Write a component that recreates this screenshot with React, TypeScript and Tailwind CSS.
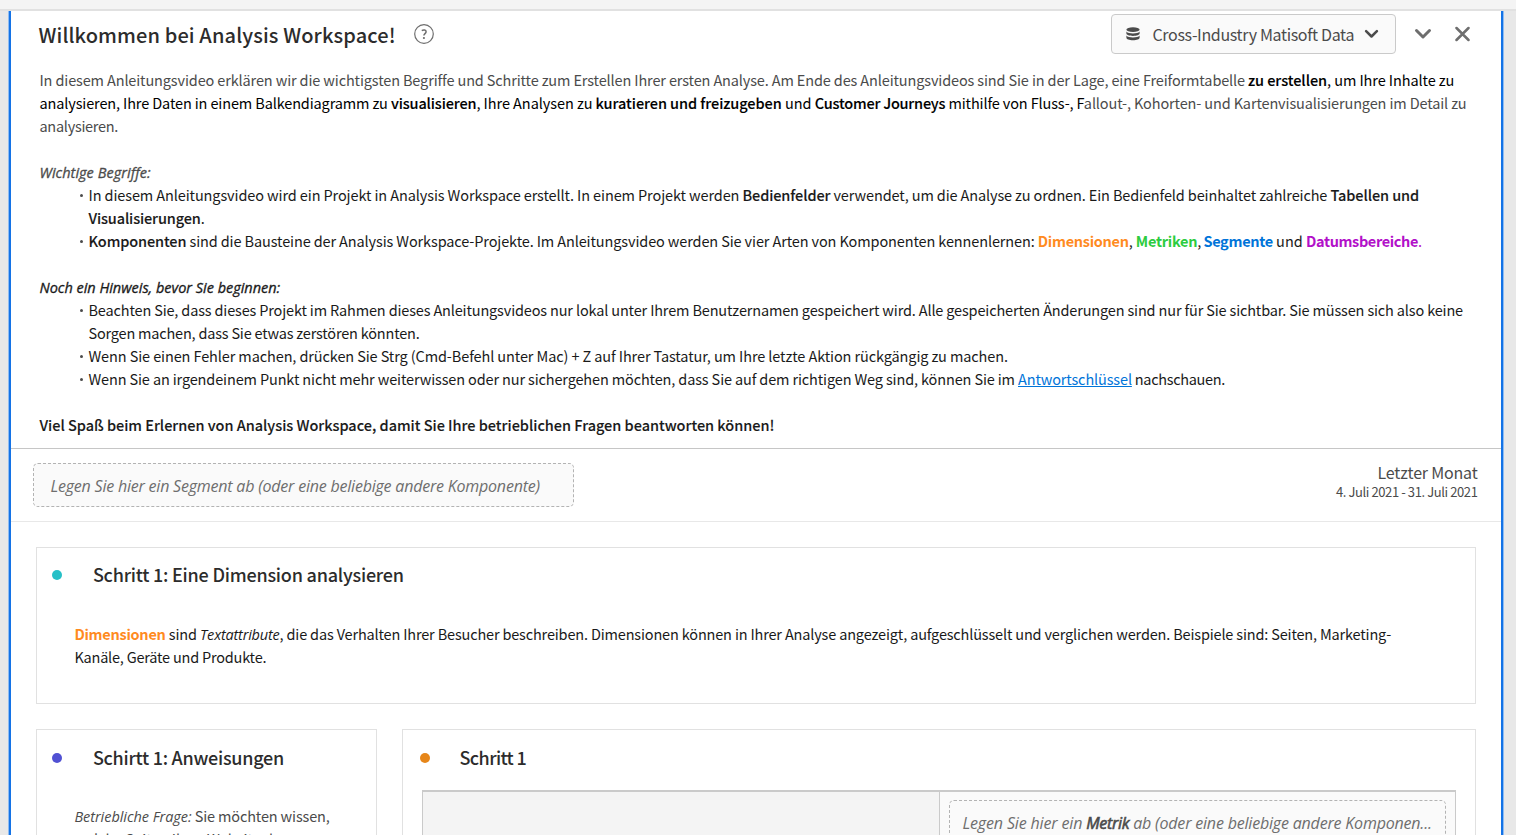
import type { ReactNode } from "react";

const Chevron = ({ className }: { className: string }) => (
  <svg className={className} viewBox="0 0 18 12" fill="none" stroke="currentColor" strokeWidth="3" strokeLinecap="round" strokeLinejoin="round">
    <path d="M2.500 2.500 9 9l6.500-6.500" />
  </svg>
);

const DatabaseIcon = () => (
  <svg className="h-[14px] w-[14px] text-[#4b4b4b]" viewBox="0 0 14 14" fill="currentColor">
    <ellipse cx="7" cy="2.6" rx="6.6" ry="2.3" />
    <path d="M.4 4.500C1.400 6 4 6.400 7 6.400S12.600 6 13.600 4.500V6.600C13.600 8 10.800 8.900 7 8.900S.4 8 .4 6.600Z" />
    <path d="M.4 8.500C1.400 10 4 10.400 7 10.400S12.600 10 13.600 8.500V10.800C13.600 12.300 10.800 13.300 7 13.300S.4 12.300 .4 10.800Z" />
  </svg>
);

const HelpIcon = () => (
  <svg className="h-5 w-5" viewBox="0 0 20 20" fill="none">
    <circle cx="10" cy="10" r="9.3" stroke="#6e6e6e" strokeWidth="1.2" />
    <path d="M7.800 6.700C9.300 5.500 12.100 5.700 12.100 7.800C12.100 9.500 9.900 9.700 9.900 11.500" stroke="#6e6e6e" strokeWidth="1.5" />
    <circle cx="9.9" cy="14" r="1.1" fill="#6e6e6e" />
  </svg>
);

const CloseIcon = () => (
  <svg className="h-4 w-4 text-[#6e6e6e]" viewBox="0 0 16 16" fill="none" stroke="currentColor" strokeWidth="2.5" strokeLinecap="round">
    <path d="M2.500 2l12 12M14.500 2l-12 12" />
  </svg>
);

const Line = ({ children, className = "" }: { children?: ReactNode; className?: string }) => (
  <p className={`h-[23px] whitespace-pre ${className}`}>{children}</p>
);

const Strong = ({ children, className = "" }: { children: ReactNode; className?: string }) => (
  <b className={`font-medium [-webkit-text-stroke:0.1px_currentColor] ${className}`}>{children}</b>
);

const Em = ({ children, className = "" }: { children: ReactNode; className?: string }) => (
  <em className={`font-['Open_Sans','Noto_Sans',sans-serif] italic ${className}`}>{children}</em>
);

const Item = ({ children }: { children: ReactNode }) => (
  <li className="flex gap-[6px] pl-[40px]">
    <span className="mt-[11px] h-[3px] w-[3px] shrink-0 rounded-full bg-[#4b4b4b]" />
    <div>{children}</div>
  </li>
);

const CardTitle = ({ dot, className, children }: { dot: string; className: string; children: ReactNode }) => (
  <div className="flex h-6 items-center">
    <span className={`h-[10px] w-[10px] rounded-full ${dot}`} />
    <h2 className={`mb-[2px] whitespace-nowrap text-[18px] leading-6 font-medium text-[#2c2c2c] ${className}`}>{children}</h2>
  </div>
);

export default function App() {
  return (
    <div className="flex h-[835px] w-full flex-col overflow-hidden bg-[#e8e8e8] font-['Noto_Sans_CJK_SC','Noto_Sans',sans-serif]">
      <div className="h-[11px] shrink-0 border-b-2 border-[#e1e1e1] bg-[#f4f4f4]" />
      <main className="mr-[12px] ml-[8px] flex min-h-0 flex-1 border-x border-[#8fbcf2]">
        <div className="flex min-w-0 flex-1 flex-col border-x-2 border-[#1473e6] bg-white">
          <header className="flex h-[47px] shrink-0 items-center pr-[31px] pb-[2px] pl-[27.5px]">
            <h1 className="mt-[3px] whitespace-nowrap text-[20px] leading-6 font-medium tracking-[0.12px] text-[#2c2c2c]">Willkommen bei Analysis Workspace!</h1>
            <span className="ml-[18.2px]"><HelpIcon /></span>
            <button className="mr-[18px] ml-auto flex h-10 w-[285px] items-center rounded-[4px] border border-[#cacaca] bg-[#fafafa] pl-[13.5px] text-[16px] text-[#4b4b4b]">
              <DatabaseIcon />
              <span className="ml-[13px] whitespace-nowrap tracking-[-0.34px]">Cross-Industry Matisoft Data</span>
              <Chevron className="ml-[9.5px] h-[10px] w-[15px]" />
            </button>
            <Chevron className="h-[12px] w-[18px] text-[#6e6e6e]" />
            <span className="ml-[22px]"><CloseIcon /></span>
          </header>

          <section className="h-[391px] shrink-0 border-b border-[#c6c6c6] pt-[10px] pl-[28.5px] text-[14.5px] leading-[23px] text-[#1a1a1a]">
            <Line className="text-[#4b4b4b]">
              <span className="tracking-[-0.135px]">In diesem Anleitungsvideo erklären wir die wichtigsten Begriffe und Schritte zum Erstellen Ihrer ersten Analyse. Am Ende des Anleitungsvideos sind Sie in der Lage, eine Freiformtabelle </span>
              <Strong className="tracking-[-0.04px] text-black">zu erstellen</Strong>
              <span className="tracking-[-0.09px] text-black">, um Ihre Inhalte zu</span>
            </Line>
            <Line className="text-black">
              <span className="tracking-[-0.13px]">analysieren, Ihre Daten in einem Balkendiagramm zu </span>
              <Strong className="tracking-[-0.13px]">visualisieren</Strong>
              <span className="tracking-[-0.06px]">, Ihre Analysen zu </span>
              <Strong className="tracking-[-0.05px]">kuratieren und freizugeben</Strong>
              <span> und </span>
              <Strong className="tracking-[-0.22px]">Customer Journeys</Strong>
              <span className="tracking-[-0.135px]"> mithilfe von Fluss-, F<span className="text-[#4b4b4b]">allout-, Kohorten- und Kartenvisualisierungen im Detail zu</span></span>
            </Line>
            <Line className="tracking-[-0.29px] text-[#4b4b4b]">analysieren.</Line>
            <Line />
            <Line className="text-[#4b4b4b]"><Em className="tracking-[0.03px] [-webkit-text-stroke:0.3px_currentColor]">Wichtige Begriffe:</Em></Line>
            <ul>
              <Item>
                <Line>
                  <span className="tracking-[-0.107px]">In diesem Anleitungsvideo wird ein Projekt in Analysis Workspace erstellt. In einem Projekt werden </span>
                  <Strong className="tracking-[-0.1px]">Bedienfelder</Strong>
                  <span className="tracking-[-0.126px]"> verwendet, um die Analyse zu ordnen. Ein Bedienfeld beinhaltet zahlreiche </span>
                  <Strong className="tracking-[-0.08px]">Tabellen und</Strong>
                </Line>
                <Line><Strong className="tracking-[-0.13px]">Visualisierungen</Strong>.</Line>
              </Item>
              <Item>
                <Line>
                  <Strong className="tracking-[-0.12px]">Komponenten</Strong>
                  <span className="tracking-[-0.12px]"> sind die Bausteine der Analysis Workspace-Projekte. Im Anleitungsvideo werden Sie vier Arten von Komponenten kennenlernen: </span>
                  <b className="tracking-[-0.29px] text-[#ff8b1f]">Dimensionen</b>
                  <span className="tracking-[-0.1px]">, </span>
                  <b className="tracking-[-0.25px] text-[#2dcc40]">Metriken</b>
                  <span className="tracking-[-0.6px]">, </span>
                  <b className="tracking-[-0.31px] text-[#0074d9]">Segmente</b>
                  <span> und </span>
                  <b className="tracking-[-0.38px] text-[#b210c9]">Datumsbereiche</b>
                  <span className="text-[#b210c9]">.</span>
                </Line>
              </Item>
            </ul>
            <Line />
            <Line><Em className="tracking-[-0.02px] [-webkit-text-stroke:0.3px_currentColor]">Noch ein Hinweis, bevor Sie beginnen:</Em></Line>
            <ul>
              <Item>
                <Line className="tracking-[-0.156px]">Beachten Sie, dass dieses Projekt im Rahmen dieses Anleitungsvideos nur lokal unter Ihrem Benutzernamen gespeichert wird. Alle gespeicherten Änderungen sind nur für Sie sichtbar. Sie müssen sich also keine</Line>
                <Line className="tracking-[-0.2px]">Sorgen machen, dass Sie etwas zerstören könnten.</Line>
              </Item>
              <Item>
                <Line className="tracking-[-0.109px]">Wenn Sie einen Fehler machen, drücken Sie Strg (Cmd-Befehl unter Mac) + Z auf Ihrer Tastatur, um Ihre letzte Aktion rückgängig zu machen.</Line>
              </Item>
              <Item>
                <Line className="tracking-[-0.137px]">
                  Wenn Sie an irgendeinem Punkt nicht mehr weiterwissen oder nur sichergehen möchten, dass Sie auf dem richtigen Weg sind, können Sie im <a className="text-[#0074d9] underline">Antwortschlüssel</a>
                  <span className="tracking-[-0.33px]"> nachschauen.</span>
                </Line>
              </Item>
            </ul>
            <Line />
            <Line><Strong className="tracking-[-0.02px]">Viel Spaß beim Erlernen von Analysis Workspace, damit Sie Ihre betrieblichen Fragen beantworten können!</Strong></Line>
          </section>

          <section className="flex h-[73px] shrink-0 items-start justify-between border-b border-[#e8e8e8] pt-[14px] pr-[23.5px] pl-[22px]">
            <div className="flex h-[44px] w-[541px] items-center rounded-[5px] border border-dashed border-[#b3b3b3] bg-[#fafafa] pt-[2px] pl-[16.5px] text-[16px] whitespace-nowrap text-[#6e6e6e]">
              <Em className="tracking-[-0.21px]">Legen Sie hier ein Segment ab (oder eine beliebige andere Komponente)</Em>
            </div>
            <div className="-mt-[2px] text-right text-[#4b4b4b]">
              <p className="text-[16px] leading-[22px] tracking-[-0.2px]">Letzter Monat</p>
              <p className="text-[13px] leading-[17px] tracking-[-0.4px]">4. Juli 2021 - 31. Juli 2021</p>
            </div>
          </section>

          <section className="flex min-h-0 flex-1 flex-col gap-[25px] pt-[25px] pr-[25px] pl-[25px] text-[14.5px] leading-[23px] text-[#1a1a1a]">
            <article className="h-[157px] shrink-0 border border-[#e1e1e1] pt-[15px] pl-[15.4px]">
              <CardTitle dot="bg-[#26c0c7]" className="ml-[30.5px] tracking-[-0.22px]">Schritt 1: Eine Dimension analysieren</CardTitle>
              <div className="pt-[35px] pl-[22px]">
                <Line>
                  <b className="tracking-[-0.27px] text-[#ff8b1f]">Dimensionen</b>
                  <span className="tracking-[-0.1px]"> sind </span>
                  <Em className="tracking-[-0.2px]">Textattribute</Em>
                  <span className="tracking-[-0.164px]">, die das Verhalten Ihrer Besucher beschreiben. Dimensionen können in Ihrer Analyse angezeigt, aufgeschlüsselt und verglichen werden. Beispiele sind: Seiten, Marketing-</span>
                </Line>
                <Line className="tracking-[-0.21px]">Kanäle, Geräte und Produkte.</Line>
              </div>
            </article>
            <div className="flex min-h-0 flex-1 gap-[25px]">
              <article className="w-[341px] shrink-0 overflow-hidden border border-b-0 border-[#e1e1e1] pt-[16px] pl-[15.4px]">
                <CardTitle dot="bg-[#5151d3]" className="ml-[30.5px] tracking-[-0.26px]">Schirtt 1: Anweisungen</CardTitle>
                <div className="pt-[34px] pl-[22px] text-[#4b4b4b]">
                  <Line>
                    <Em className="tracking-[-0.05px]">Betriebliche Frage:</Em>
                    <span className="tracking-[-0.15px]"> Sie möchten wissen,</span>
                  </Line>
                  <Line>welche Seiten Ihrer Website den</Line>
                </div>
              </article>
              <article className="min-w-0 flex-1 overflow-hidden border border-b-0 border-[#e1e1e1] pt-[16px] pr-[19px] pl-[17px]">
                <CardTitle dot="bg-[#e68619]" className="ml-[29.5px] tracking-[-0.6px]">Schritt 1</CardTitle>
                <div className="mt-[20px] ml-[2px] flex h-[60px] border border-t-2 border-[#cacaca] bg-[#f4f4f4]">
                  <div className="w-[517px] border-r border-[#cacaca]" />
                  <div className="min-w-0 flex-1 bg-[#fafafa] px-[9px] pt-[8px]">
                    <div className="flex h-[46px] items-center rounded-[5px] border border-dashed border-[#b3b3b3] pl-[12.5px] text-[16px] whitespace-pre text-[#6e6e6e]">
                      <Em className="tracking-[-0.15px]">Legen Sie hier ein </Em>
                      <Em className="tracking-[-0.3px] text-[#4b4b4b] [-webkit-text-stroke:0.6px_currentColor]">Metrik</Em>
                      <Em className="tracking-[-0.19px]"> ab (oder eine beliebige andere Komponen...</Em>
                    </div>
                  </div>
                </div>
              </article>
            </div>
          </section>
        </div>
      </main>
    </div>
  );
}
